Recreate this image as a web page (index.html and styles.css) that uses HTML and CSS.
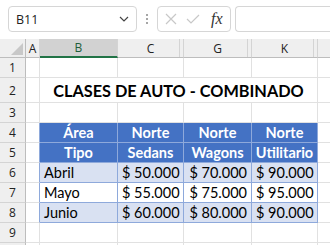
FILE: index.html
```html
<!DOCTYPE html>
<html lang="es">
<head>
<meta charset="utf-8">
<link rel="stylesheet" href="styles.css">
</head>
<body>
<div class="toolbar">
  <div class="namebox">
    <span class="nb-text">B11</span>
    <svg class="chev" width="10" height="6" viewBox="0 0 10 6"><path d="M1 1 L5 5 L9 1" fill="none" stroke="#444" stroke-width="1.2"/></svg>
  </div>
  <div class="dots"><span></span><span></span><span></span></div>
  <div class="fxbox">
    <svg width="14" height="14" viewBox="0 0 14 14"><path d="M2 2 L12 12 M12 2 L2 12" stroke="#c8c8c8" stroke-width="1.2"/></svg>
    <svg width="16" height="14" viewBox="0 0 16 14"><path d="M2 7 L6 11 L14 3" fill="none" stroke="#c8c8c8" stroke-width="1.2"/></svg>
    <span class="fx">fx</span>
  </div>
  <div class="formula"></div>
</div>
<div class="sheet">
  <div class="c corner"><svg width="12" height="12" viewBox="0 0 12 12"><path d="M12 0 L12 12 L0 12 Z" fill="#c8c8c8"/></svg></div>
  <div class="c ch">A</div>
  <div class="c ch sel">B</div>
  <div class="c ch hid">C</div>
  <div class="c ch hid">G</div>
  <div class="c ch hid">K</div>
  <div class="c ch last"></div>

  <div class="c rh">1</div><div class="c"></div><div class="c"></div><div class="c"></div><div class="c"></div><div class="c"></div><div class="c last"></div>

  <div class="c rh">2</div><div class="c"></div><div class="c title">CLASES DE AUTO - COMBINADO</div><div class="c last"></div>

  <div class="c rh">3</div><div class="c"></div><div class="c"></div><div class="c"></div><div class="c"></div><div class="c"></div><div class="c last"></div>

  <div class="c rh">4</div><div class="c tl"></div><div class="c th">Área</div><div class="c th">Norte</div><div class="c th">Norte</div><div class="c th">Norte</div><div class="c last"></div>

  <div class="c rh">5</div><div class="c tl"></div><div class="c th">Tipo</div><div class="c th">Sedans</div><div class="c th">Wagons</div><div class="c th">Utilitario</div><div class="c last"></div>

  <div class="c rh">6</div><div class="c tl"></div><div class="c td band">Abril</div><div class="c td band num">$ 50.000</div><div class="c td band num">$ 70.000</div><div class="c td band num">$ 90.000</div><div class="c last"></div>

  <div class="c rh">7</div><div class="c tl"></div><div class="c td">Mayo</div><div class="c td num">$ 55.000</div><div class="c td num">$ 75.000</div><div class="c td num">$ 95.000</div><div class="c last"></div>

  <div class="c rh">8</div><div class="c tl"></div><div class="c td band">Junio</div><div class="c td band num">$ 60.000</div><div class="c td band num">$ 80.000</div><div class="c td band num">$ 90.000</div><div class="c last"></div>

  <div class="c rh">9</div><div class="c"></div><div class="c"></div><div class="c"></div><div class="c"></div><div class="c"></div><div class="c last"></div>

  <div class="c rh"></div><div class="c"></div><div class="c"></div><div class="c"></div><div class="c"></div><div class="c"></div><div class="c last"></div>
</div>
</body>
</html>
```

FILE: styles.css
```css
* { box-sizing: border-box; }
html, body { margin: 0; padding: 0; background: #fff; }
body { width: 330px; height: 245px; overflow: hidden; font-family: "Lato", "Open Sans", sans-serif; }

.toolbar {
  height: 39px;
  display: flex;
  align-items: flex-start;
  padding: 6px 0 0 8px;
  background: #fff;
}
.namebox {
  width: 129px;
  height: 26px;
  border: 1px solid #d6d6d6;
  border-radius: 4px;
  display: flex;
  align-items: center;
  justify-content: space-between;
  padding: 0 7px 0 7px;
  font-family: "Open Sans", sans-serif;
  font-size: 12.5px;
  color: #222;
}
.dots {
  width: 20px;
  height: 26px;
  display: flex;
  flex-direction: column;
  align-items: center;
  justify-content: center;
  gap: 2px;
}
.dots span { width: 2px; height: 2px; background: #888; border-radius: 1px; }
.fxbox {
  width: 74px;
  height: 26px;
  border: 1px solid #d6d6d6;
  border-radius: 4px;
  display: flex;
  align-items: center;
  padding: 0 0 0 6px;
  gap: 7px;
}
.fx {
  font-family: "Liberation Serif", serif;
  font-style: italic;
  font-size: 16px;
  color: #333;
  margin-left: 3px;
}
.formula {
  flex: 1;
  margin-left: 4px;
  height: 26px;
  border: 1px solid #d6d6d6;
  border-right: none;
  border-radius: 4px 0 0 4px;
}

.sheet {
  display: grid;
  grid-template-columns: 26px 14px 78px 66px 68px 66px 12px;
  grid-template-rows: 19px 20px 25px 20px 20px 20px 20px 20px 20px 20px 20px;
  font-family: "Lato", sans-serif;
  font-size: 14.5px;
  color: #000;
}
.c {
  border-right: 1px solid #e1e1e1;
  border-bottom: 1px solid #e1e1e1;
  overflow: hidden;
  white-space: nowrap;
}
.c.last { border-right: none; }
.corner {
  background: #efefef;
  border-right: 1px solid #bdbdbd;
  border-bottom: 1px solid #bdbdbd;
  display: flex;
  align-items: flex-end;
  justify-content: flex-end;
  padding: 0 2px 2px 0;
}
.ch {
  background: #efefef;
  border-right: 1px solid #d4d4d4;
  border-bottom: 1px solid #bdbdbd;
  display: flex;
  align-items: center;
  justify-content: center;
  font-family: "Open Sans", sans-serif;
  font-size: 12px;
  color: #222;
  position: relative;
}
.ch.sel {
  background: #d2d2d2;
  border-bottom: 2px solid #217346;
  color: #1e5e3a;
}
.ch.hid::after {
  content: "";
  position: absolute;
  right: 3px;
  top: 0;
  bottom: 0;
  width: 1px;
  background: #d4d4d4;
}
.ch.last { border-right: none; }
.rh {
  background: #efefef;
  border-right: 1px solid #bdbdbd;
  border-bottom: 1px solid #d4d4d4;
  display: flex;
  align-items: center;
  justify-content: center;
  font-family: "Open Sans", sans-serif;
  font-size: 12px;
  color: #222;
}
.title {
  grid-column: 3 / 7;
  display: flex;
  align-items: center;
  justify-content: center;
  font-weight: 700;
  font-size: 16.3px;
  padding-top: 1px;
}
.tl { border-right-color: #8ea9db; }
.th {
  background: #4472c4;
  color: #fff;
  font-weight: 700;
  text-align: center;
  line-height: 19px;
  border-right: 1px solid #8ea9db;
  border-bottom: 1px solid #8ea9db;
}
.td {
  line-height: 19px;
  padding: 0 4px;
  border-right: 1px solid #8ea9db;
  border-bottom: 1px solid #8ea9db;
}
.td.band { background: #d9e1f2; }
.td.num { text-align: right; }
```
